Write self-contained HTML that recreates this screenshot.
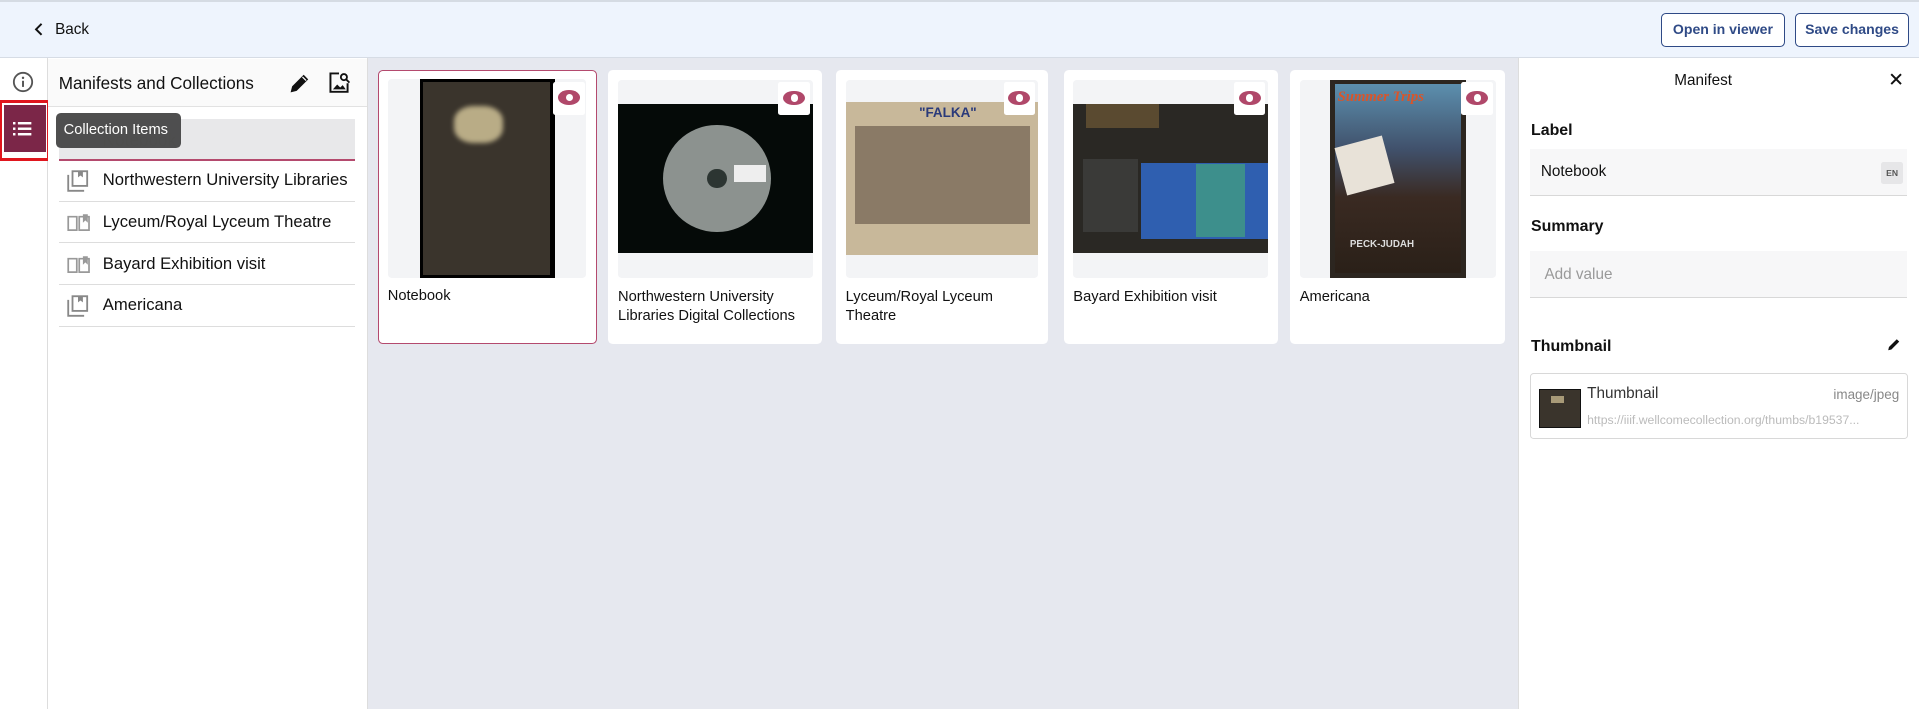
<!DOCTYPE html>
<html><head><meta charset="utf-8"><style>
html,body{margin:0;padding:0;width:1919px;height:709px;overflow:hidden;background:#fff;}
#w{position:absolute;left:0;top:0;width:1568px;height:579px;zoom:1.22385;font-family:"Liberation Sans",sans-serif;color:#111;}
.a{position:absolute;}
.btn{position:absolute;border:1px solid #2f4a86;border-radius:4px;background:#fff;color:#2f4a86;font-weight:bold;font-size:11.5px;text-align:center;line-height:26px;white-space:nowrap;}
.row{position:absolute;left:48px;width:242px;height:33px;border-bottom:1px solid #ddd;font-size:13.6px;line-height:33px;white-space:nowrap;}
.row span{position:absolute;left:36px;}
.card{position:absolute;top:57px;height:224px;background:#fff;border-radius:4px;}
.img{position:absolute;left:8px;top:8px;right:8px;height:162px;background:#f3f4f6;border-radius:3px;overflow:hidden;}
.cap{position:absolute;left:8px;top:178px;right:8px;font-size:12px;line-height:16px;}
.eye{position:absolute;right:10px;top:10px;width:26px;height:27px;background:#fff;border-radius:2px;}
.eye::after{content:"";position:absolute;left:4px;top:7px;width:18px;height:12px;border-radius:50%;background:#b0486a;}
.eye::before{content:"";position:absolute;left:10px;top:10px;width:6px;height:6px;border-radius:50%;background:#fff;z-index:1;}
.lbl{position:absolute;left:1251px;font-size:13px;font-weight:bold;}
.inp{position:absolute;left:1250px;width:308px;background:#f7f7f8;border-bottom:1px solid #d8d8d8;}
</style></head><body><div id="w">
<div class="a" style="left:0;top:0;width:1568px;height:47px;background:#eef4fd;border-top:2px solid #d5dbe3;box-sizing:border-box;border-bottom:1px solid #d6dce5"></div>
<svg class="a" style="left:27px;top:18px" width="10" height="12" viewBox="0 0 10 12"><path d="M7 1.5L2.5 6L7 10.5" stroke="#111" stroke-width="1.6" fill="none"/></svg>
<div class="a" style="left:45px;top:17px;font-size:12.5px">Back</div>
<div class="btn" style="left:1357px;top:11px;width:100px;height:26px">Open in viewer</div>
<div class="btn" style="left:1467px;top:11px;width:91px;height:26px">Save changes</div>

<div class="a" style="left:0;top:47px;width:38px;height:532px;border-right:1px solid #ddd;background:#fff"></div>
<svg class="a" style="left:10px;top:58px" width="18" height="18" viewBox="0 0 18 18"><circle cx="9" cy="9" r="7.5" stroke="#555" stroke-width="1.5" fill="none"/><rect x="8.2" y="8" width="1.6" height="5" fill="#555"/><circle cx="9" cy="5.6" r="1" fill="#555"/></svg>
<div class="a" style="left:-1px;top:82px;width:37px;height:45px;border:3px solid #e0161e;border-right-width:4px;box-sizing:content-box"></div>
<div class="a" style="left:3px;top:86px;width:35px;height:38px;background:#7b2648"></div>
<svg class="a" style="left:11px;top:100px" width="16" height="11" viewBox="0 0 16 11"><g fill="#fff"><rect x="0" y="0" width="2" height="2"/><rect x="4" y="0" width="11" height="2"/><rect x="0" y="4.5" width="2" height="2"/><rect x="4" y="4.5" width="11" height="2"/><rect x="0" y="9" width="2" height="2"/><rect x="4" y="9" width="11" height="2"/></g></svg>

<div class="a" style="left:39px;top:47px;width:261px;height:532px;background:#fff;border-right:1px solid #ddd"></div>
<div class="a" style="left:39px;top:48px;width:261px;height:39px;background:#fafafa;border-bottom:1px solid #e2e2e2"></div>
<div class="a" style="left:48px;top:60px;font-size:14px">Manifests and Collections</div>
<svg class="a" style="left:236px;top:59px" width="18" height="18" viewBox="0 0 18 18"><path d="M2 16l1-4L12 3l3 3-9 9z" fill="#111" stroke="#111" stroke-width="1"/><path d="M11 4l3 3" stroke="#fff" stroke-width="1"/></svg>
<svg class="a" style="left:268px;top:58px" width="19" height="19" viewBox="0 0 19 19"><path d="M9 2H2v15h14v-7" fill="none" stroke="#111" stroke-width="1.6"/><circle cx="13" cy="5" r="2.5" fill="none" stroke="#111" stroke-width="1.5"/><path d="M15 7l2.5 2.5" stroke="#111" stroke-width="1.5"/><path d="M4 15l3.5-4 2.5 2.5 2-2 2.5 3.5z" fill="#111"/></svg>
<div class="a" style="left:48px;top:97px;width:242px;height:33px;background:#e8e8ea;border-bottom:2px solid #b44a6e"></div>
<div class="a" style="left:84px;top:106px;font-size:14px;color:#aaa">Notebook</div>
<div class="row" style="top:131px"><svg class="a" style="left:7px;top:8px" width="18" height="18" viewBox="0 0 18 18"><path d="M1 4v13h13" fill="none" stroke="#888" stroke-width="1.5"/><rect x="4.5" y="1" width="12" height="12" fill="none" stroke="#888" stroke-width="1.5"/><path d="M9 1v5l2-1.5 2 1.5V1z" fill="#888"/></svg><span>Northwestern University Libraries</span></div>
<div class="row" style="top:165px"><svg class="a" style="left:7px;top:9px" width="19" height="15" viewBox="0 0 19 15"><path d="M1 3h7v11H1zM10 3h8v11h-8z" fill="none" stroke="#999" stroke-width="1.4"/><path d="M13 1v7l2-2 2 2V1z" fill="#999"/></svg><span>Lyceum/Royal Lyceum Theatre</span></div>
<div class="row" style="top:199px"><svg class="a" style="left:7px;top:9px" width="19" height="15" viewBox="0 0 19 15"><path d="M1 3h7v11H1zM10 3h8v11h-8z" fill="none" stroke="#999" stroke-width="1.4"/><path d="M13 1v7l2-2 2 2V1z" fill="#999"/></svg><span>Bayard Exhibition visit</span></div>
<div class="row" style="top:233px"><svg class="a" style="left:7px;top:8px" width="18" height="18" viewBox="0 0 18 18"><path d="M1 4v13h13" fill="none" stroke="#888" stroke-width="1.5"/><rect x="4.5" y="1" width="12" height="12" fill="none" stroke="#888" stroke-width="1.5"/><path d="M9 1v5l2-1.5 2 1.5V1z" fill="#888"/></svg><span>Americana</span></div>
<div class="a" style="left:46px;top:92px;width:102px;height:29px;background:#4a4a4a;border-radius:4px;color:#fff;font-size:12px;line-height:29px;text-indent:6px;opacity:.97">Collection Items</div>

<div class="a" style="left:301px;top:47px;width:939px;height:532px;background:#e6e8ef"></div>

<div class="card" style="left:309px;width:179px;border:1.5px solid #b44a6e;box-sizing:border-box;height:224px">
 <div class="img" style="left:7px;top:7px"><div class="a" style="left:26px;top:0;width:111px;height:162px;background:#000"><div class="a" style="left:3px;top:2px;width:104px;height:158px;background:#3a342c"></div><div class="a" style="left:28px;top:22px;width:40px;height:30px;background:#b9ac86;border-radius:40%;filter:blur(2px)"></div></div></div>
 <div class="eye" style="right:9px;top:9px"></div>
 <div class="cap" style="left:7px;top:177px">Notebook</div></div>
<div class="card" style="left:497px;width:175px">
 <div class="img"><div class="a" style="left:0;top:20px;width:159px;height:122px;background:#050a08"><div class="a" style="left:37px;top:17px;width:88px;height:88px;border-radius:50%;background:#8c928f"></div><div class="a" style="left:73px;top:53px;width:16px;height:16px;border-radius:50%;background:#2c3532"></div><div class="a" style="left:95px;top:50px;width:26px;height:14px;background:#eee"></div></div></div>
 <div class="eye"></div>
 <div class="cap">Northwestern University Libraries Digital Collections</div></div>
<div class="card" style="left:683px;width:173px">
 <div class="img"><div class="a" style="left:0;top:18px;width:159px;height:125px;background:#c8b89a"><div class="a" style="left:8px;top:20px;width:143px;height:80px;background:#8a7a66"></div><div class="a" style="left:60px;top:3px;font-size:11px;font-weight:bold;color:#2a3a7a">"FALKA"</div></div></div>
 <div class="eye"></div>
 <div class="cap">Lyceum/Royal Lyceum Theatre</div></div>
<div class="card" style="left:869px;width:175px">
 <div class="img"><div class="a" style="left:0;top:20px;width:163px;height:122px;background:#2a2824"><div class="a" style="left:10px;top:0;width:60px;height:20px;background:#5a4a30"></div><div class="a" style="left:55px;top:48px;width:110px;height:62px;background:#2f5fb0"></div><div class="a" style="left:100px;top:49px;width:40px;height:60px;background:#3d8f8c"></div><div class="a" style="left:8px;top:45px;width:45px;height:60px;background:#3a3a38"></div></div></div>
 <div class="eye"></div>
 <div class="cap">Bayard Exhibition visit</div></div>
<div class="card" style="left:1054px;width:176px">
 <div class="img"><div class="a" style="left:25px;top:0;width:111px;height:162px;background:#2c2620"><div class="a" style="left:4px;top:4px;width:103px;height:154px;background:linear-gradient(#5c8fae 0%,#40506a 35%,#3a2a22 60%,#2a2018 100%)"></div><div class="a" style="left:6px;top:8px;font-size:12px;font-style:italic;font-weight:bold;color:#d9552a;font-family:'Liberation Serif',serif">Summer Trips</div><div class="a" style="left:8px;top:50px;width:40px;height:40px;background:#e8e2d8;transform:rotate(-15deg)"></div><div class="a" style="left:16px;top:130px;font-size:8px;font-weight:bold;color:#ddd">PECK-JUDAH</div></div></div>
 <div class="eye"></div>
 <div class="cap">Americana</div></div>

<div class="a" style="left:1240px;top:47px;width:328px;height:532px;background:#fff;border-left:1px solid #ddd"></div>
<div class="a" style="left:1368px;top:59px;font-size:12.5px">Manifest</div>
<svg class="a" style="left:1544px;top:60px" width="10" height="10" viewBox="0 0 10 10"><path d="M1 1l8 8M9 1l-8 8" stroke="#111" stroke-width="1.6"/></svg>
<div class="lbl" style="top:100px">Label</div>
<div class="inp" style="top:122px;height:37px"><div class="a" style="left:9px;top:11px;font-size:12.5px">Notebook</div><div class="a" style="right:3px;top:10px;width:18px;height:18px;background:#e6e6e8;border-radius:2px;font-size:7px;line-height:18px;text-align:center;color:#555;font-weight:bold">EN</div></div>
<div class="lbl" style="top:178px">Summary</div>
<div class="inp" style="top:205px;height:38px"><div class="a" style="left:12px;top:12px;font-size:12.5px;color:#999">Add value</div></div>
<div class="lbl" style="top:276px">Thumbnail</div>
<svg class="a" style="left:1542px;top:276px" width="11" height="11" viewBox="0 0 11 11"><path d="M1 10l.6-2.6L8 1l2 2-6.4 6.4z" fill="#111"/></svg>
<div class="a" style="left:1250px;top:305px;width:307px;height:52px;border:1px solid #d8d8d8;border-radius:3px"><div class="a" style="left:7px;top:12px;width:32px;height:30px;background:#3a342c;border:1px solid #111"><div class="a" style="left:9px;top:5px;width:10px;height:6px;background:#a89a78"></div></div><div class="a" style="left:46px;top:9px;font-size:12.5px;color:#333">Thumbnail</div><div class="a" style="right:6px;top:10px;font-size:11px;color:#888">image/jpeg</div><div class="a" style="left:46px;top:32px;font-size:10px;color:#bbb">https://iiif.wellcomecollection.org/thumbs/b19537...</div></div>
</div>
</body></html>
